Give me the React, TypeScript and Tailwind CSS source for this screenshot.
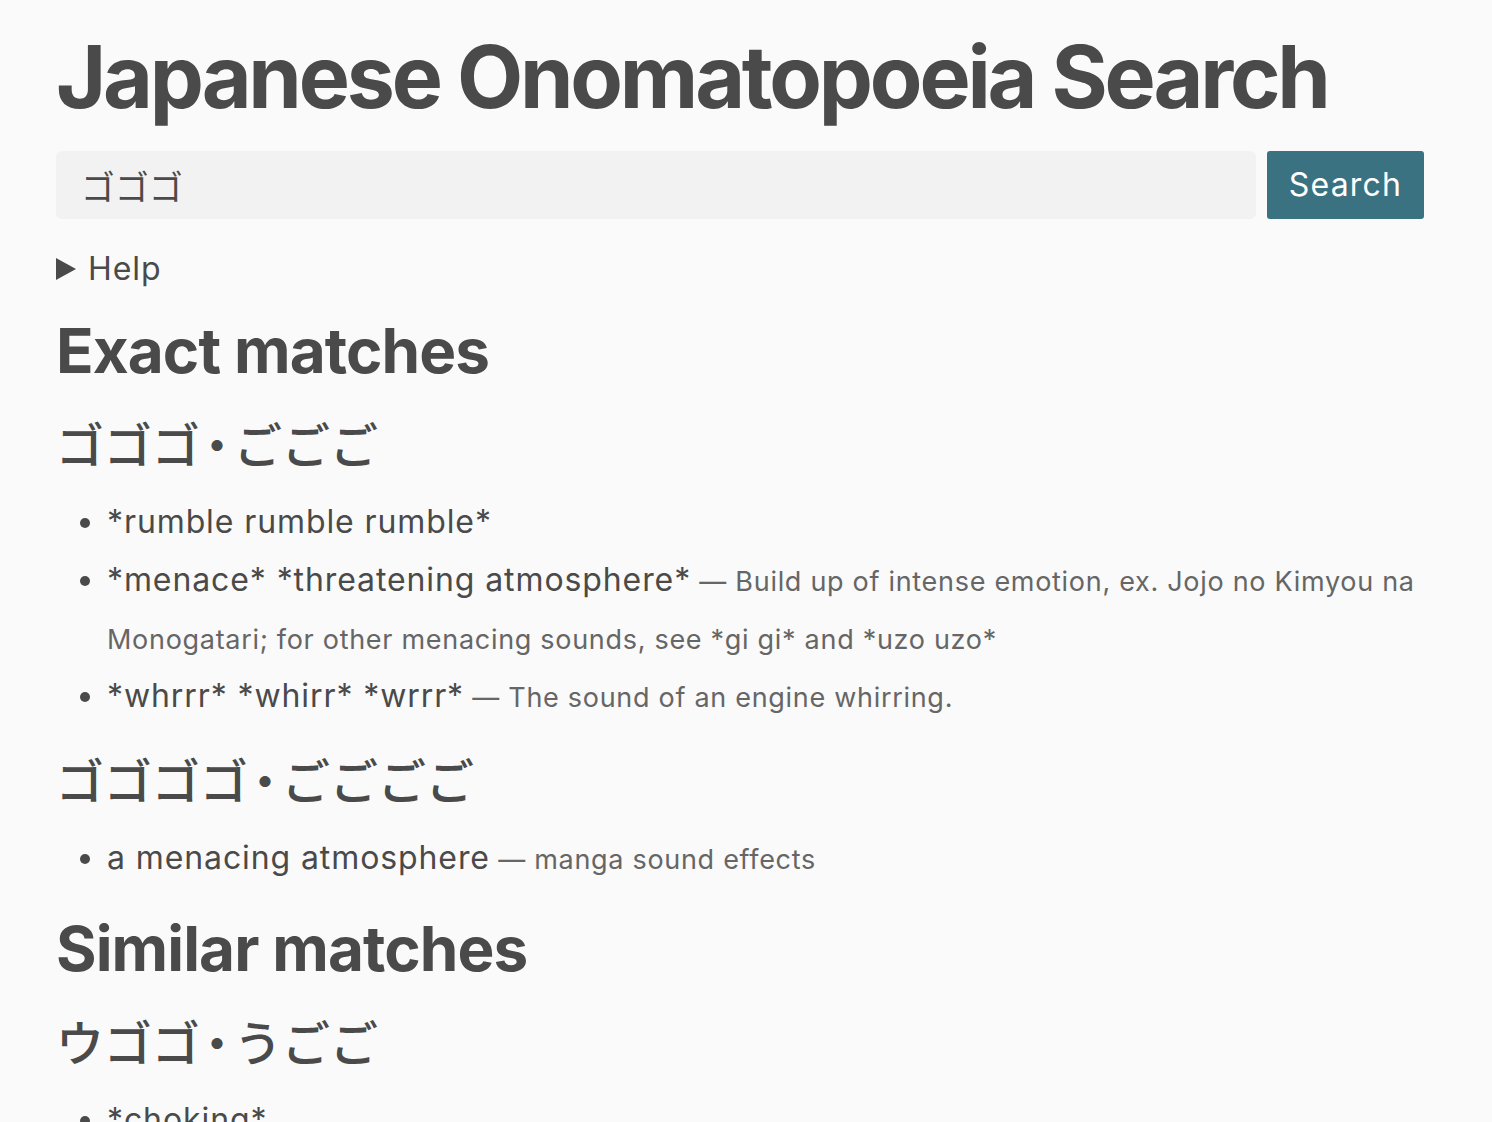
import React from 'react';

type Sense = { gloss: string; note?: string };
type Entry = { katakana: string; hiragana: string; senses: Sense[] };

const exact: Entry[] = [
  {
    katakana: 'ゴゴゴ',
    hiragana: 'ごごご',
    senses: [
      { gloss: '*rumble rumble rumble*' },
      {
        gloss: '*menace* *threatening atmosphere*',
        note: 'Build up of intense emotion, ex. Jojo no Kimyou na Monogatari; for other menacing sounds, see *gi gi* and *uzo uzo*',
      },
      { gloss: '*whrrr* *whirr* *wrrr*', note: 'The sound of an engine whirring.' },
    ],
  },
  {
    katakana: 'ゴゴゴゴ',
    hiragana: 'ごごごご',
    senses: [{ gloss: 'a menacing atmosphere', note: 'manga sound effects' }],
  },
];

const similar: Entry[] = [
  {
    katakana: 'ウゴゴ',
    hiragana: 'うごご',
    senses: [{ gloss: '*choking*' }],
  },
];

const latin = { fontFamily: 'Inter, "Noto Sans CJK JP", sans-serif' };
const jp = { fontFamily: '"Noto Sans CJK JP", Inter, sans-serif' };

const EntryBlock = ({ entry }: { entry: Entry }) => (
  <div>
    <h3 className="text-[48px] font-medium leading-[60px] mt-[23px] mb-[21px] tracking-normal" style={jp}>
      {entry.katakana}
      <span className="mx-[-7px]">・</span>
      {entry.hiragana}
    </h3>
    <ul className="list-disc pl-[51px] text-[32px] leading-[58px]">
      {entry.senses.map((s, i) => (
        <li key={i}>
          {s.gloss}
          {s.note && (
            <span className="text-[27px] leading-none text-[#666666] tracking-[0.7px]"> — {s.note}</span>
          )}
        </li>
      ))}
    </ul>
  </div>
);

export default function App() {
  return (
    <div className="min-h-screen bg-[#fafafa] text-[#4a4a4a] tracking-[0.9px]" style={latin}>
      <div className="w-[1424px] pl-[56px] pt-[27px]">
        <h1 className="text-[86px] font-bold leading-[100px] tracking-[-3.2px]">
          Japanese Onomatopoeia Search
        </h1>

        <form className="flex gap-[11px] mt-[24px]" onSubmit={(e) => e.preventDefault()}>
          <input
            defaultValue="ゴゴゴ"
            className="flex-1 h-[68px] rounded-[6px] bg-[#f2f2f2] px-[25px] text-[34px] text-[#4a4a4a] outline-none tracking-normal"
            style={jp}
          />
          <button className="w-[157px] h-[68px] rounded-[3px] bg-[#3a7282] text-white text-[32px] tracking-[1.2px]">
            Search
          </button>
        </form>

        <div className="flex items-center gap-[12px] mt-[30px] text-[32px] leading-[40px]">
          <svg width="20" height="22" viewBox="0 0 20 22">
            <path d="M0 0 L20 11 L0 22 Z" fill="#4a4a4a" />
          </svg>
          <span>Help</span>
        </div>

        <h2 className="text-[62px] font-bold leading-[76px] mt-[24px] tracking-[-0.9px]">Exact matches</h2>
        {exact.map((e) => (
          <EntryBlock key={e.katakana} entry={e} />
        ))}

        <h2 className="text-[62px] font-bold leading-[76px] mt-[24px] tracking-[-0.9px]">Similar matches</h2>
        {similar.map((e) => (
          <EntryBlock key={e.katakana} entry={e} />
        ))}
      </div>
    </div>
  );
}
